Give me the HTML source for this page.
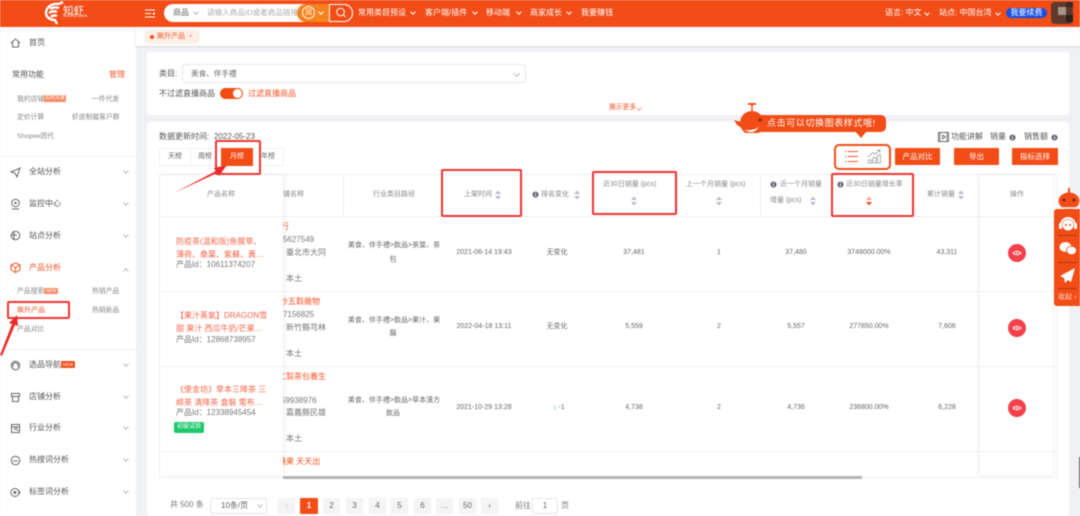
<!DOCTYPE html>
<html lang="zh"><head><meta charset="utf-8"><title>飙升产品</title>
<style>
*{box-sizing:border-box;margin:0;padding:0}
html,body{width:1080px;height:516px;overflow:hidden;background:#f0f1f5}
#r{position:relative;width:1080px;height:516px;overflow:hidden;background:#f0f1f5;font-family:"Liberation Sans","Noto Sans CJK SC",sans-serif;font-size:8px;color:#666;filter:blur(.4px)}
.b,.t,svg.a,.ch{position:absolute}
.t{white-space:nowrap;line-height:12px}
.c{transform:translateX(-50%)}
.w{color:#fff}.o{color:#f4552a}
.s{font-size:6.8px;color:#888}
.ch{width:4px;height:4px;border-right:1px solid #bbb;border-bottom:1px solid #bbb;transform:rotate(45deg)}
.cw{border-color:#fff}
.ln{position:absolute;background:#eef0f5}
.red{position:absolute;border:2px solid #ee3333;border-radius:2px}
.btn{position:absolute;background:#f24c17;color:#fff;text-align:center;line-height:17px;height:17px;width:45px;font-size:7.5px;border-radius:1px}
.pg{position:absolute;top:498px;width:17px;height:16px;background:#f4f4f5;text-align:center;line-height:16px;color:#666;font-size:8px;border-radius:1px}
.d{font-size:7px;color:#666}
.h{font-size:7px;color:#888}
.pn{font-size:8px;color:#f4654a;line-height:12px}
.id{font-size:8px;color:#777}
.sn{font-size:8px}
</style></head><body><div id="r">
<svg width="0" height="0" style="position:absolute"><defs>
<symbol id="so" viewBox="0 0 8 10"><path d="M4 0.5 7 4H1zM4 9.5 1 6h6z" fill="#b8bcc6"/></symbol>
<symbol id="ey" viewBox="0 0 18 18"><circle cx="9" cy="9" r="9" fill="#f6404a"/><path d="M5 9q4-3.500 8 0q-4 3.500-8 0z" fill="none" stroke="#fff" stroke-width="1"/><circle cx="9" cy="9" r=".8" fill="#fff"/></symbol>
<symbol id="in" viewBox="0 0 8 8"><circle cx="4" cy="4" r="3.5" fill="#667"/><rect x="3.5" y="3.2" width="1" height="3" fill="#fff"/><rect x="3.5" y="1.6" width="1" height="1" fill="#fff"/></symbol>
</defs></svg>

<!-- top bar -->
<div class="b" style="left:0;top:0;width:1080px;height:27px;background:#f24c17"></div>
<svg class="a" style="left:44px;top:1px" width="20" height="25" viewBox="0 0 20 25"><path d="M15 3C8 2 2 6 2 12c0 4 4 7 9 7l2 4M6 8c3-2 6-2 9-1M5 12c3-2 6-2 8-1M7 16c2-2 4-2 6-1M15 3l4-2" fill="none" stroke="#fff" stroke-width="2.4"/></svg>
<div class="t w" style="left:63px;top:3px;font-size:10.500px;line-height:16px">知虾</div>
<div class="t w" style="left:63px;top:13px;font-size:3.5px;line-height:6px">SHOPEE DATA</div>
<svg class="a" style="left:145px;top:9px" width="11" height="9" viewBox="0 0 11 9"><path d="M0 1h10M0 4.500h6M0 8h10" stroke="#fff" stroke-width="1"/><rect x="8" y="3.500" width="2" height="2" fill="#fff"/></svg>
<div class="b" style="left:164px;top:4px;width:189px;height:18px;border-radius:9px;background:#fff"></div>
<div class="t" style="left:173px;top:7px;color:#666">商品</div>
<div class="ch" style="left:194px;top:10px"></div>
<div class="t" style="left:207px;top:7px;color:#aaa;font-size:7.6px">请输入商品ID或者商品链接</div>
<div class="b" style="left:297px;top:4px;width:32px;height:18px;border-radius:9px 0 0 9px;background:#f5841e"></div>
<div class="b" style="left:302px;top:6px;width:13px;height:13px;border-radius:50%;border:1px solid #fff"></div>
<div class="t w" style="left:305px;top:7px;font-size:7px">润</div>
<div class="ch cw" style="left:319px;top:10px"></div>
<div class="b" style="left:329px;top:4px;width:24px;height:18px;border-radius:0 9px 9px 0;background:#f24c17;border:1px solid #fff"></div>
<svg class="a" style="left:335px;top:7px" width="12" height="11" viewBox="0 0 12 11"><circle cx="5.500" cy="5" r="3.800" fill="none" stroke="#fff"/><path d="M8.500 8l2 2" stroke="#fff"/></svg>

<div class="t w" style="left:358px;top:7px">常用类目预设</div><div class="ch cw" style="left:411px;top:10px"></div>
<div class="t w" style="left:425px;top:7px">客户端/插件</div><div class="ch cw" style="left:473px;top:10px"></div>
<div class="t w" style="left:486px;top:7px">移动端</div><div class="ch cw" style="left:517px;top:10px"></div>
<div class="t w" style="left:530px;top:7px">商家成长</div><div class="ch cw" style="left:567px;top:10px"></div>
<div class="t w" style="left:581px;top:7px">我要赚钱</div>
<div class="t w" style="left:885px;top:7px">语言: 中文</div><div class="ch cw" style="left:925px;top:11px"></div>
<div class="t w" style="left:939px;top:7px">站点: 中国台湾</div><div class="ch cw" style="left:996px;top:11px"></div>
<div class="b w" style="left:1006px;top:8px;width:41px;height:10px;border-radius:5px;background:#1450e8;text-align:center;line-height:10px;font-size:8px">我要续费</div>
<div class="b" style="left:1051px;top:2px;width:22px;height:22px;border-radius:4px;background:#5e3a2c"></div>
<div class="b" style="left:1058px;top:7px;width:8px;height:8px;background:#a89488"></div>
<div class="b" style="left:1066px;top:15px;width:7px;height:7px;background:#2b2220"></div>
<div class="b" style="left:1066px;top:2px;width:7px;height:5px;background:#3a2a24"></div>

<!-- sidebar -->
<div class="b" style="left:0;top:27px;width:136px;height:489px;background:#fff"></div>
<!-- tab row -->
<div class="b" style="left:136px;top:27px;width:944px;height:19px;background:#fff;box-shadow:0 1px 2px #d8dae0"></div>
<div class="b" style="left:144px;top:30px;width:56px;height:14px;border-radius:6px;background:#fdeee6"></div>
<div class="b" style="left:150px;top:35px;width:4px;height:4px;border-radius:50%;background:#f24c17"></div>
<div class="t o" style="left:157px;top:31px;font-size:7px">飙升产品</div>
<div class="t" style="left:189px;top:31px;font-size:6px;color:#e88">×</div>

<svg class="a" style="left:10px;top:38px" width="11" height="10" viewBox="0 0 11 10"><path d="M1 5 5.500 1 10 5M2.500 4v5h6V4" fill="none" stroke="#666"/></svg>
<div class="t" style="left:29px;top:37px;color:#555">首页</div>
<div class="t" style="left:12px;top:69px;color:#555">常用功能</div>
<div class="t o" style="left:109px;top:69px">管理</div>
<div class="t s" style="left:17px;top:94px">我的店铺</div>
<div class="b w" style="left:44px;top:95px;width:22px;height:7px;background:#f98a66;border-radius:1px;font-size:5px;line-height:7px;text-align:center">实时文章</div>
<div class="t s" style="left:92px;top:94px">一件代发</div>
<div class="t s" style="left:17px;top:112px">定价计算</div>
<div class="t s" style="left:72px;top:112px">虾皮制裁客户群</div>
<div class="t s" style="left:17px;top:131px">Shopee团代</div>
<div class="ln" style="left:0;top:156px;width:136px;height:1px"></div>

<svg class="a" style="left:10px;top:167px" width="11" height="11" viewBox="0 0 11 11"><path d="M1 5 10 1 7 10 5 6z" fill="none" stroke="#666"/></svg>
<div class="t" style="left:29px;top:166px;color:#555">全站分析</div><div class="ch" style="left:124px;top:169px"></div>
<svg class="a" style="left:10px;top:198px" width="11" height="12" viewBox="0 0 11 12"><circle cx="5.500" cy="5" r="3.800" fill="none" stroke="#666"/><circle cx="5.500" cy="5" r="1.200" fill="#666"/><path d="M2 11h7" stroke="#666"/></svg>
<div class="t" style="left:29px;top:198px;color:#555">监控中心</div><div class="ch" style="left:124px;top:201px"></div>
<svg class="a" style="left:10px;top:230px" width="11" height="11" viewBox="0 0 11 11"><circle cx="5.500" cy="5.500" r="4.300" fill="none" stroke="#666"/><path d="M4 1v9M1 5h6" stroke="#666"/></svg>
<div class="t" style="left:29px;top:230px;color:#555">站点分析</div><div class="ch" style="left:124px;top:233px"></div>
<svg class="a" style="left:10px;top:262px" width="11" height="11" viewBox="0 0 11 11"><path d="M5.500 1 10 3v5l-4.500 2.500L1 8V3zM1 3l4.500 2.500L10 3M5.500 5.500v5" fill="none" stroke="#f4552a"/></svg>
<div class="t o" style="left:29px;top:262px">产品分析</div><div class="ch" style="left:124px;top:269px;transform:rotate(225deg)"></div>
<div class="t s" style="left:17px;top:286px">产品搜索</div>
<div class="b w" style="left:44px;top:288px;width:14px;height:6px;background:#f98a66;border-radius:1px;font-size:4.500px;line-height:6px;text-align:center">NEW</div>
<div class="t s" style="left:92px;top:286px">热销产品</div>
<div class="t o" style="left:17px;top:305px;font-size:7px">飙升产品</div>
<div class="t s" style="left:92px;top:305px">热销新品</div>
<div class="t s" style="left:17px;top:324px">产品对比</div>
<div class="ln" style="left:0;top:349px;width:136px;height:1px"></div>
<svg class="a" style="left:10px;top:360px" width="11" height="11" viewBox="0 0 11 11"><circle cx="5.500" cy="5.500" r="4.300" fill="none" stroke="#666"/><path d="M3 7V4l2.500-1.500L8 4v3" fill="none" stroke="#666"/></svg>
<div class="t" style="left:29px;top:359px;color:#555">选品导航</div>
<div class="b w" style="left:61px;top:361px;width:14px;height:7px;background:#f24c17;border-radius:1px;font-size:4.500px;line-height:7px;text-align:center">NEW</div>
<div class="ch" style="left:124px;top:362px"></div>
<svg class="a" style="left:10px;top:392px" width="11" height="11" viewBox="0 0 11 11"><path d="M1.500 1.500h8v3h-8zM2.500 4.500v5h6v-5" fill="none" stroke="#666"/></svg>
<div class="t" style="left:29px;top:391px;color:#555">店铺分析</div><div class="ch" style="left:124px;top:394px"></div>
<svg class="a" style="left:10px;top:423px" width="11" height="11" viewBox="0 0 11 11"><path d="M1.500 1.500h8v8h-8zM1.500 4h8M4 7l2-2 2 3" fill="none" stroke="#666"/></svg>
<div class="t" style="left:29px;top:422px;color:#555">行业分析</div><div class="ch" style="left:124px;top:425px"></div>
<svg class="a" style="left:10px;top:455px" width="11" height="11" viewBox="0 0 11 11"><circle cx="5.500" cy="5.500" r="4.300" fill="none" stroke="#666"/><path d="M3 6h5" stroke="#666"/></svg>
<div class="t" style="left:29px;top:454px;color:#555">热搜词分析</div><div class="ch" style="left:124px;top:457px"></div>
<svg class="a" style="left:10px;top:487px" width="11" height="11" viewBox="0 0 11 11"><circle cx="5" cy="5.500" r="4" fill="none" stroke="#666"/><circle cx="5" cy="5.500" r="1.500" fill="#666"/><path d="M8 3l2 2.500-2 2.500" fill="none" stroke="#666"/></svg>
<div class="t" style="left:29px;top:486px;color:#555">标签词分析</div><div class="ch" style="left:124px;top:489px"></div>

<!-- filter card -->
<div class="b" style="left:147px;top:52px;width:922px;height:63px;background:#fff;border-radius:2px"></div>
<div class="t" style="left:159px;top:68px;color:#555">类目:</div>
<div class="b" style="left:182px;top:64px;width:344px;height:19px;border:1px solid #e6e8ef;border-radius:3px"></div>
<div class="t" style="left:191px;top:68px;color:#666;font-size:7.6px">美食、伴手禮</div>
<div class="ch" style="left:514px;top:71px;width:5px;height:5px"></div>
<div class="t" style="left:159px;top:88px;color:#555">不过滤直播商品</div>
<div class="b" style="left:220px;top:88px;width:23px;height:11px;border-radius:6px;background:#f24c17"></div>
<div class="b" style="left:233px;top:89px;width:9px;height:9px;border-radius:50%;background:#fff"></div>
<div class="t o" style="left:248px;top:88px">过滤直播商品</div>
<div class="t o" style="left:609px;top:102px;font-size:6.800px">展示更多</div>
<div class="ch" style="left:637px;top:106px;border-color:#f4a08a"></div>

<!-- results card -->
<div class="b" style="left:147px;top:122px;width:922px;height:394px;background:#fff;border-radius:2px"></div>
<div class="t" style="left:159px;top:131px;color:#555">数据更新时间:</div>
<div class="t" style="left:214px;top:131px;color:#555;font-size:8px">2022-05-23</div>
<!-- tabs -->
<div class="b" style="left:159px;top:148px;width:125px;height:18px;border:1px solid #eef0f3"></div>
<div class="ln" style="left:190px;top:148px;width:1px;height:18px"></div>
<div class="t c" style="left:175px;top:151px;font-size:7px">天榜</div>
<div class="t c" style="left:205px;top:151px;font-size:7px">周榜</div>
<div class="b w" style="left:221px;top:148px;width:32px;height:18px;background:#f24c17;text-align:center;line-height:18px;font-size:7px">月榜</div>
<div class="t c" style="left:268px;top:151px;font-size:7px">年榜</div>

<!-- table frame -->
<div class="b" style="left:159px;top:174px;width:899px;height:304px;border:1px solid #eef0f5"></div>
<div class="ln" style="left:159px;top:216px;width:899px;height:1px"></div>
<div class="ln" style="left:159px;top:291px;width:899px;height:1px"></div>
<div class="ln" style="left:159px;top:366px;width:899px;height:1px"></div>
<div class="ln" style="left:159px;top:451px;width:899px;height:1px"></div>
<div class="ln" style="left:343px;top:174px;width:1px;height:42px"></div>
<div class="ln" style="left:442px;top:174px;width:1px;height:42px"></div>
<div class="ln" style="left:522px;top:174px;width:1px;height:42px"></div>
<div class="ln" style="left:592px;top:174px;width:1px;height:42px"></div>
<div class="ln" style="left:677px;top:174px;width:1px;height:42px"></div>
<div class="ln" style="left:760px;top:174px;width:1px;height:42px"></div>
<div class="ln" style="left:831px;top:174px;width:1px;height:42px"></div>
<div class="ln" style="left:915px;top:174px;width:1px;height:42px"></div>

<!-- scroll columns -->
<div class="t h" style="left:276px;top:189px">店铺名称</div>
<div class="t o sn" style="left:273px;top:221px">商行</div>
<div class="t id" style="left:278.500px;top:234px">15627549</div>
<div class="t id" style="left:286px;top:247px">臺北市大同</div>
<div class="t id" style="left:286px;top:273px">本土</div>
<div class="t o sn" style="left:272px;top:296px">沙沙五穀雜物</div>
<div class="t id" style="left:278.500px;top:309px">87156825</div>
<div class="t id" style="left:286px;top:322px">新竹縣芎林</div>
<div class="t id" style="left:286px;top:348px">本土</div>
<div class="t o sn" style="left:278px;top:371px">仁製茶包養生</div>
<div class="t id" style="left:281px;top:395px">59938976</div>
<div class="t id" style="left:286px;top:407px">嘉義縣民雄</div>
<div class="t id" style="left:286px;top:433px">本土</div>
<div class="t o sn" style="left:278px;top:456px">糖果 天天出</div>

<div class="t h c" style="left:394px;top:189px">行业类目路径</div>
<div class="t d c" style="left:394px;top:240px">美食、伴手禮>飲品>茶葉、茶</div><div class="t d c" style="left:393px;top:254px">包</div>
<div class="t d c" style="left:394px;top:315px">美食、伴手禮>飲品>果汁、果</div><div class="t d c" style="left:393px;top:328px">腦</div>
<div class="t d c" style="left:394px;top:395px">美食、伴手禮>飲品>草本漢方</div><div class="t d c" style="left:393px;top:408px">飲品</div>

<div class="t h" style="left:464px;top:189px">上架时间</div><svg class="a" style="left:494px;top:190px" width="8" height="10"><use href="#so"/></svg>
<svg class="a" style="left:532px;top:191px" width="7" height="7"><use href="#in"/></svg>
<div class="t h" style="left:541px;top:189px">排名变化</div><svg class="a" style="left:573px;top:190px" width="8" height="10"><use href="#so"/></svg>
<div class="t h" style="left:603px;top:179px">近30日销量 (pcs)</div><svg class="a" style="left:630px;top:196px" width="8" height="10"><use href="#so"/></svg>
<div class="t h" style="left:686px;top:179px">上一个月销量 (pcs)</div><svg class="a" style="left:715px;top:196px" width="8" height="10"><use href="#so"/></svg>
<svg class="a" style="left:770px;top:181px" width="7" height="7"><use href="#in"/></svg>
<div class="t h" style="left:780px;top:179px">近一个月销量</div>
<div class="t h" style="left:770px;top:195px">增量 (pcs)</div><svg class="a" style="left:809px;top:196px" width="8" height="10"><use href="#so"/></svg>
<svg class="a" style="left:837px;top:181px" width="7" height="7"><use href="#in"/></svg>
<div class="t h" style="left:846px;top:179px">近30日销量增长率</div>
<svg class="a" style="left:865px;top:196px" width="8" height="10" viewBox="0 0 8 10"><path d="M4 .5 7 4H1z" fill="#f8a08a"/><path d="M4 9.500 1 6h6z" fill="#f24c17"/></svg>
<div class="t h" style="left:927px;top:189px">累计销量</div><svg class="a" style="left:957px;top:190px" width="8" height="10"><use href="#so"/></svg>

<div class="t d c" style="left:484px;top:247px">2021-06-14 19:43</div>
<div class="t d c" style="left:484px;top:321px">2022-04-18 13:11</div>
<div class="t d c" style="left:484px;top:402px">2021-10-29 13:28</div>
<div class="t d c" style="left:557px;top:247px">无变化</div>
<div class="t d c" style="left:557px;top:321px">无变化</div>
<div class="t d" style="left:553px;top:402px"><span style="color:#2fae5a">↓</span> -1</div>
<div class="t d c" style="left:634px;top:247px">37,481</div><div class="t d c" style="left:634px;top:321px">5,559</div><div class="t d c" style="left:634px;top:402px">4,738</div>
<div class="t d c" style="left:719px;top:247px">1</div><div class="t d c" style="left:719px;top:321px">2</div><div class="t d c" style="left:719px;top:402px">2</div>
<div class="t d c" style="left:796px;top:247px">37,480</div><div class="t d c" style="left:796px;top:321px">5,557</div><div class="t d c" style="left:796px;top:402px">4,736</div>
<div class="t d c" style="left:869px;top:247px">3748000.00%</div><div class="t d c" style="left:869px;top:321px">277850.00%</div><div class="t d c" style="left:869px;top:402px">236800.00%</div>
<div class="t d c" style="left:947px;top:247px">43,311</div><div class="t d c" style="left:947px;top:321px">7,606</div><div class="t d c" style="left:947px;top:402px">6,228</div>

<!-- fixed left -->
<div class="b" style="left:160px;top:175px;width:123px;height:300px;background:#fff;box-shadow:2px 0 4px rgba(0,0,0,.06)"></div>
<div class="ln" style="left:160px;top:216px;width:123px;height:1px"></div>
<div class="ln" style="left:160px;top:291px;width:123px;height:1px"></div>
<div class="ln" style="left:160px;top:366px;width:123px;height:1px"></div>
<div class="ln" style="left:160px;top:451px;width:123px;height:1px"></div>
<div class="t h c" style="left:221px;top:189px">产品名称</div>
<div class="t pn" style="left:176px;top:236px">防疫茶(温和版)鱼腥草、</div>
<div class="t pn" style="left:176px;top:249px">薄荷、桑葉、紫蘇、黃…</div>
<div class="t id" style="left:176px;top:259px">产品Id：10611374207</div>
<div class="t pn" style="left:176px;top:310px">【果汁蒸氣】DRAGON雪</div>
<div class="t pn" style="left:176px;top:323px">甜 果汁 西瓜牛奶/芒果…</div>
<div class="t id" style="left:176px;top:334px">产品Id：12868738957</div>
<div class="t pn" style="left:176px;top:384px">《堡金坊》草本三降茶 三</div>
<div class="t pn" style="left:176px;top:397px">締茶 清降茶 盒裝 電布…</div>
<div class="t id" style="left:176px;top:407px">产品Id：12338945454</div>
<div class="b w" style="left:174px;top:422px;width:30px;height:11px;background:#1ec86a;border-radius:2px;font-size:6px;text-align:center;line-height:11px">初級试验</div>

<!-- fixed right -->
<div class="b" style="left:980px;top:175px;width:73px;height:300px;background:#fff;box-shadow:-2px 0 4px rgba(0,0,0,.06),2px 0 3px rgba(0,0,0,.04)"></div>
<div class="ln" style="left:980px;top:216px;width:73px;height:1px"></div>
<div class="ln" style="left:980px;top:291px;width:73px;height:1px"></div>
<div class="ln" style="left:980px;top:366px;width:73px;height:1px"></div>
<div class="ln" style="left:980px;top:451px;width:73px;height:1px"></div>
<div class="t h c" style="left:1017px;top:189px">操作</div>
<svg class="a" style="left:1008px;top:244px" width="18" height="18"><use href="#ey"/></svg>
<svg class="a" style="left:1008px;top:319px" width="18" height="18"><use href="#ey"/></svg>
<svg class="a" style="left:1008px;top:399px" width="18" height="18"><use href="#ey"/></svg>

<!-- scrollbar -->
<div class="b" style="left:283px;top:476px;width:579px;height:3px;background:#b4b4b4"></div>

<!-- toolbar -->
<svg class="a" style="left:938px;top:132px" width="11" height="10" viewBox="0 0 11 10"><rect x=".5" y=".5" width="10" height="9" fill="none" stroke="#666"/><path d="M2 .5v9M9 .5v9M4.500 3v4l3-2z" fill="none" stroke="#666" stroke-width=".8"/></svg>
<div class="t" style="left:951px;top:131px;color:#555">功能讲解</div>
<div class="t" style="left:990px;top:131px;color:#555">销量</div>
<svg class="a" style="left:1009px;top:134px" width="7" height="7"><use href="#in"/></svg>
<div class="t" style="left:1024px;top:131px;color:#555">销售额</div>
<svg class="a" style="left:1051px;top:134px" width="7" height="7"><use href="#in"/></svg>
<div class="b" style="left:834px;top:144px;width:57px;height:26px;border:2px solid #f24c17;border-radius:5px;background:#fff"></div>
<svg class="a" style="left:844px;top:150px" width="15" height="13" viewBox="0 0 15 13"><path d="M4 1.500h10M4 6.500h10M4 11.500h10M1 1.500h1.500M1 6.500h1.500M1 11.500h1.500" stroke="#f4552a"/></svg>
<svg class="a" style="left:867px;top:149px" width="14" height="15" viewBox="0 0 14 15"><path d="M1.500 14v-3h3v3zM6 14V8.500h3V14zM10.500 14V6h3v8zM1 8 6 3.500 8 5l5-4M10 1h3v3" fill="none" stroke="#b0b0b0"/></svg>
<div class="btn" style="left:895px;top:148px">产品对比</div>
<div class="btn" style="left:954px;top:148px">导出</div>
<div class="btn" style="left:1012px;top:148px;width:46px">指标选择</div>

<!-- whale bubble -->
<div class="b" style="left:755px;top:115px;width:131px;height:17px;background:#f24c17;border-radius:5px"></div>
<svg class="a" style="left:855px;top:131px" width="12" height="8"><path d="M0 0h12L6 7z" fill="#f24c17"/></svg>
<div class="t w" style="left:767px;top:117px;font-size:9px;line-height:13px;letter-spacing:.6px">点击可以切换图表样式哦!</div>
<svg class="a" style="left:733px;top:102px" width="34" height="31" viewBox="0 0 34 31"><path d="M19 2v8" stroke="#f24c17" stroke-width="1.500"/><path d="M15 2h8" stroke="#f24c17" stroke-width="2"/><circle cx="19" cy="21" r="12" fill="#f24c17"/><path d="M8 20 1 18l3 5 5 3z" fill="#f24c17"/><path d="M11 28q9 1 15-3q-4 6-10 5z" fill="#fff"/><circle cx="27" cy="18" r="2" fill="#a6300c"/></svg>

<!-- annotations -->
<div class="red" style="left:7px;top:301px;width:63px;height:18px"></div>
<div class="red" style="left:215px;top:140px;width:46px;height:35px"></div>
<div class="red" style="left:441px;top:169px;width:81px;height:48px"></div>
<div class="red" style="left:592px;top:171px;width:85px;height:44px"></div>
<div class="red" style="left:831px;top:173px;width:83px;height:44px"></div>
<svg class="a" style="left:0;top:140px" width="240" height="220"><path d="M174 53 216 31l-2-3 13-3-8 11-2-3-43 20z" fill="#ee2b2b"/><path d="M0 215 12 184l-3-1 8-8 1 11-3-1L2 216z" fill="#ee2b2b"/></svg>

<!-- robot side panel -->
<svg class="a" style="left:1058px;top:188px" width="22" height="22" viewBox="0 0 22 22"><path d="M11 0v6" stroke="#f24c17" stroke-width="2"/><ellipse cx="11" cy="13" rx="10.500" ry="8.500" fill="#f24c17"/><circle cx="6" cy="12" r="1.500" fill="#7a2208"/><circle cx="16" cy="12" r="1.500" fill="#7a2208"/><path d="M3 20h16" stroke="#fff" stroke-width="1.500"/></svg>
<div class="b" style="left:1054px;top:209px;width:26px;height:97px;background:#f24c17;border-radius:3px 0 0 3px"></div>
<svg class="a" style="left:1058px;top:214px" width="20" height="20" viewBox="0 0 20 20"><path d="M3 11a7 7 0 0 1 14 0" fill="none" stroke="#fff" stroke-width="2"/><circle cx="10" cy="11" r="5.500" fill="#fff"/><rect x="1" y="9" width="3" height="6" rx="1" fill="#fff"/><rect x="16" y="9" width="3" height="6" rx="1" fill="#fff"/><circle cx="8" cy="11" r="1" fill="#f24c17"/><circle cx="12" cy="11" r="1" fill="#f24c17"/></svg>
<div class="b" style="left:1058px;top:235px;width:19px;height:1px;background:#b5360d"></div>
<svg class="a" style="left:1059px;top:241px" width="18" height="15" viewBox="0 0 18 15"><ellipse cx="6.500" cy="6" rx="6" ry="5" fill="#fff"/><ellipse cx="12.500" cy="9.500" rx="5" ry="4.300" fill="#fff" stroke="#f24c17" stroke-width=".8"/></svg>
<div class="b" style="left:1058px;top:262px;width:19px;height:1px;background:#b5360d"></div>
<svg class="a" style="left:1059px;top:267px" width="17" height="17" viewBox="0 0 17 17"><path d="M16 1 1 9l4 2zM16 1 5 11l1 5 3-3 3 2z" fill="#fff"/></svg>
<div class="b" style="left:1058px;top:288px;width:19px;height:1px;background:#b5360d"></div>
<div class="t" style="left:1058px;top:292px;color:#ffd9cc;font-size:7px">收起 ›</div>

<!-- pagination -->
<div class="t" style="left:170px;top:499px;color:#777">共 500 条</div>
<div class="b" style="left:210px;top:498px;width:57px;height:16px;border:1px solid #e3e5ec;border-radius:2px"></div>
<div class="t" style="left:221px;top:500px;color:#666">10条/页</div>
<div class="ch" style="left:258px;top:503px"></div>
<div class="pg" style="left:278px;color:#ccc">‹</div>
<div class="pg" style="left:300px;width:18px;background:#f24c17;color:#fff;font-weight:bold">1</div>
<div class="pg" style="left:323px">2</div><div class="pg" style="left:346px">3</div><div class="pg" style="left:369px">4</div><div class="pg" style="left:391px">5</div><div class="pg" style="left:414px">6</div><div class="pg" style="left:436px">…</div><div class="pg" style="left:459px">50</div><div class="pg" style="left:481px">›</div>
<div class="t" style="left:515px;top:500px;color:#777">前往</div>
<div class="b" style="left:532px;top:498px;width:26px;height:16px;border:1px solid #e3e5ec;border-radius:2px;text-align:center;line-height:14px;color:#666">1</div>
<div class="t" style="left:561px;top:500px;color:#777">页</div>

<div class="b" style="left:1079px;top:457px;width:1px;height:31px;background:#555"></div>
</div></body></html>
